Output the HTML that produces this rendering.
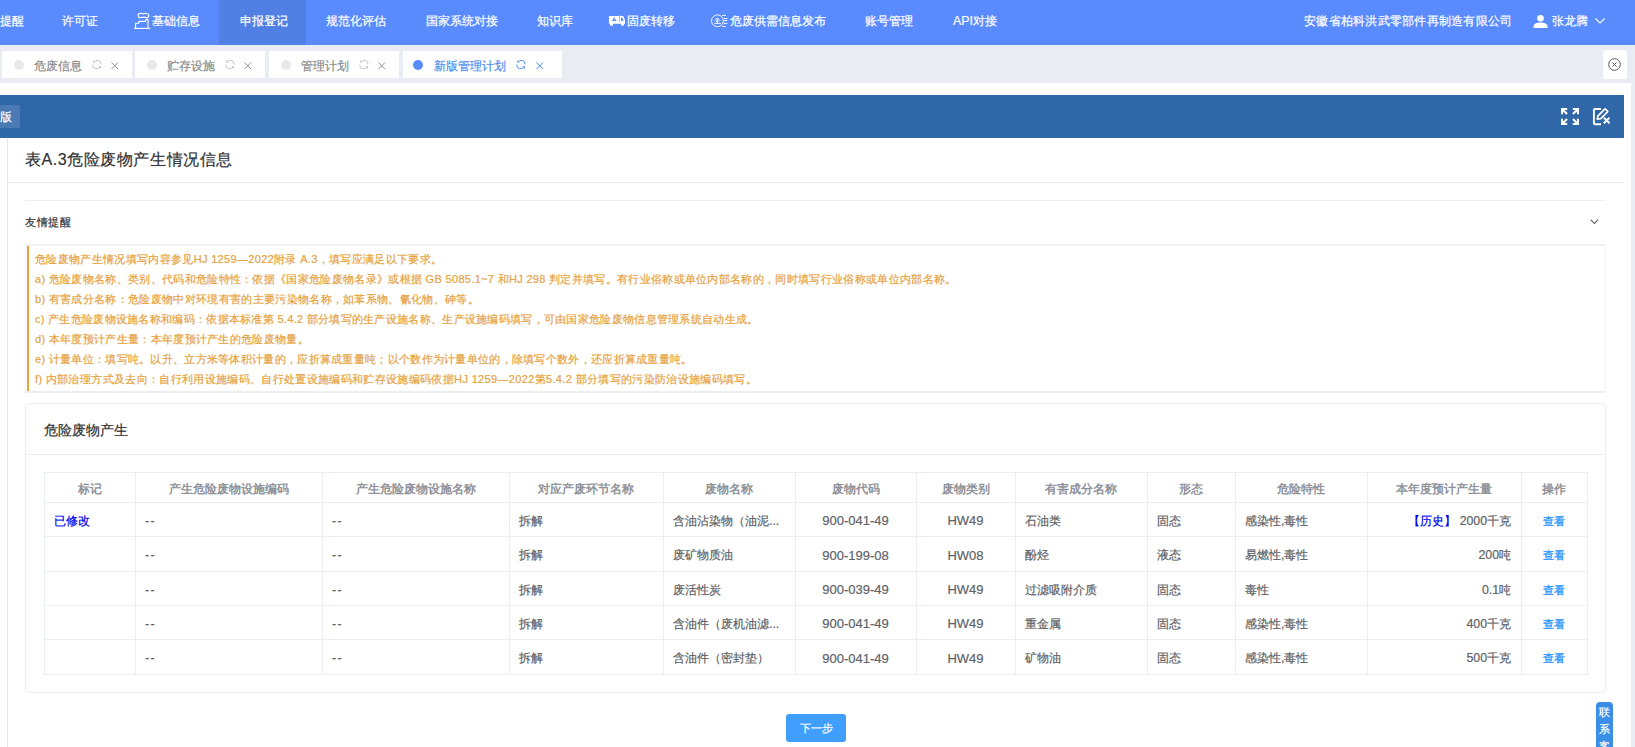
<!DOCTYPE html>
<html><head><meta charset="utf-8">
<style>
*{box-sizing:border-box;margin:0;padding:0}
html,body{width:1635px;height:747px;overflow:hidden;background:#fff;font-family:"Liberation Sans",sans-serif;}
body *{-webkit-text-stroke-width:0.2px}
.abs{position:absolute;white-space:nowrap}
#nav{position:absolute;left:0;top:0;width:1635px;height:45px;background:#598bff;color:#fff;font-size:12.3px}
#nav .it{position:absolute;top:0;height:43px;line-height:43px}
#nav .act{position:absolute;left:219px;top:0;width:87px;height:45px;background:#5080e3}
#tabbar{position:absolute;left:0;top:45px;width:1635px;height:38px;background:#e9ecf3}
.tab{position:absolute;top:6px;height:27px;background:#fff;font-size:12px;color:#8c8c8c}
.tab .dot{position:absolute;top:9px;width:10px;height:10px;border-radius:50%;background:#e8e8e8}
.tab .tx{position:absolute;top:1.5px;line-height:27px}
.tab svg{position:absolute}
#content{position:absolute;left:0;top:83px;width:1631px;height:664px;background:#fff}
#strip{position:absolute;left:1631px;top:83px;width:4px;height:664px;background:#e9ecf3}
#tbar{position:absolute;left:0;top:95px;width:1624px;height:43px;background:#2f67a8}
table{border-collapse:collapse;table-layout:fixed}

#tbl .hl{position:absolute;left:44px;width:1544px;background:#ebeef5}
#tbl .vl{position:absolute;top:472px;width:1px;height:202px;background:#ebeef5}
#tbl .th{position:absolute;top:473.5px;height:30px;line-height:30px;text-align:center;font-weight:bold;color:#909399;font-size:12px;white-space:nowrap}
#tbl .td{position:absolute;font-size:12.3px;color:#606266;white-space:nowrap;overflow:hidden;padding-top:1.5px}
#tbl .num{font-size:13px}
#tbl .td.l{padding-left:10px}
#tbl .td.c{text-align:center}
#tbl .td.r{text-align:right;padding-right:10px}
#tbl .mod{color:#0000ee}
#tbl .hist{color:#0000ee}
#tbl .view{color:#409eff;font-size:10.5px;font-weight:bold;-webkit-text-stroke-width:0}
#tbl .th{-webkit-text-stroke-width:0}
#tbl .dash{letter-spacing:1.5px}
</style></head><body>
<div id="nav">
  <div class="act"></div>
  <div class="it" style="left:0px">提醒</div>
  <div class="it" style="left:62px">许可证</div>
  <svg class="abs" style="left:130px;top:8px" width="25" height="25" viewBox="0 0 25 25" fill="none" stroke="#fff" stroke-width="1.1" stroke-linejoin="round"><path d="M4 20.4H20.3"/><path d="M5.6 20.4V15.3H8.9V13.4H15.7V12.3Q15.7 11.4 16.85 11.4Q18 11.4 18 12.3V20.4"/><path d="M9.8 9.6Q8.1 9.6 8.1 7.6Q8.1 5.3 10.3 5.4Q11.7 5.1 13 5.9Q14.6 5.1 16.3 5.5Q18.9 5.9 18.9 7.8Q18.9 9.7 16.9 9.6Q15 9.4 13.9 9.1Q12.3 9.7 9.8 9.6Z"/></svg>
  <div class="it" style="left:152px">基础信息</div>
  <div class="it" style="left:240px">申报登记</div>
  <div class="it" style="left:326px">规范化评估</div>
  <div class="it" style="left:426px">国家系统对接</div>
  <div class="it" style="left:537px">知识库</div>
  <svg class="abs" style="left:603px;top:8px" width="28" height="25" viewBox="0 0 28 25"><path fill="#fff" fill-rule="evenodd" d="M6.4 7.9H16.4V14H6.4Q5.9 14 5.9 13.5V8.4Q5.9 7.9 6.4 7.9Z M11.3 9L8.9 12.9H13.7Z"/><path fill="#fff" d="M11.1 10.2h.4v2.4h-.4z"/><path fill="#fff" fill-rule="evenodd" d="M16.9 7V14H16.4V14H5.9V15.7H22V12.2L20.6 8.6Q20.3 8 19.6 8H17.4V7Z M18 9.7H19.6L20.4 13H18Z"/><rect x="7" y="15" width="3" height="2.7" rx="1" fill="#fff"/><rect x="18" y="15" width="3" height="2.7" rx="1" fill="#fff"/></svg>
  <div class="it" style="left:627px">固废转移</div>
  <svg class="abs" style="left:707px;top:8px" width="25" height="25" viewBox="0 0 25 25" fill="none" stroke="#fff" stroke-width="0.9"><circle cx="10.4" cy="12.8" r="5.9"/><path d="M7.6 12.6L10.4 10.1 13.3 12.6M10.4 10.4V15M8.8 13.2H12M7.3 15.4H13.8"/><path d="M15 7.4H18.9M16.7 10.5H20.4M16.7 12.5H20.4M16.7 15.4H20.4M15 18.4H18.9"/></svg>
  <div class="it" style="left:730px">危废供需信息发布</div>
  <div class="it" style="left:865px">账号管理</div>
  <div class="it" style="left:953px">API对接</div>
  <div class="it" style="left:1304px;letter-spacing:0.25px">安徽省柏科洪武零部件再制造有限公司</div>
  <svg class="abs" style="left:1533px;top:15px" width="15" height="13" viewBox="0 0 15 13"><circle cx="7.5" cy="3.3" r="3.3" fill="#fff"/><path d="M0.5 13v-1.5C.5 9 3.5 7.5 7.5 7.5S14.5 9 14.5 11.5V13z" fill="#fff"/></svg>
  <div class="it" style="left:1552px">张龙腾</div>
  <svg class="abs" style="left:1595px;top:18px" width="10" height="6" viewBox="0 0 10 6" fill="none" stroke="#fff" stroke-width="1.1"><path d="M.5.5L5 5 9.5.5"/></svg>
</div>

<div id="tabbar">
  <div class="tab" style="left:2px;width:130px"><div class="dot" style="left:12px"></div><div class="tx" style="left:32px">危废信息</div>
    <svg style="left:90px;top:9px" width="10" height="10" viewBox="0 0 10 10" fill="none" stroke="#c0c0c0" stroke-width="1"><path d="M2.6 1.5Q3.4 .5 5 .5H6.4Q8.9 .5 9.1 4.4"/><path d="M.7 4.6Q.8 8.6 3.6 8.6H5.2Q6.4 8.6 7.4 7.6"/><path d="M1.2 0V2.6H3.8z M8.9 8.9V6.3H6.3z" fill="#c0c0c0" stroke="none"/></svg>
    <svg style="left:109px;top:11px" width="8" height="8" viewBox="0 0 8 8" stroke="#909090" stroke-width="1"><path d="M.5 .5L7 7M7 .5L.5 7"/></svg></div>
  <div class="tab" style="left:135px;width:130px"><div class="dot" style="left:12px"></div><div class="tx" style="left:32px">贮存设施</div>
    <svg style="left:90px;top:9px" width="10" height="10" viewBox="0 0 10 10" fill="none" stroke="#c0c0c0" stroke-width="1"><path d="M2.6 1.5Q3.4 .5 5 .5H6.4Q8.9 .5 9.1 4.4"/><path d="M.7 4.6Q.8 8.6 3.6 8.6H5.2Q6.4 8.6 7.4 7.6"/><path d="M1.2 0V2.6H3.8z M8.9 8.9V6.3H6.3z" fill="#c0c0c0" stroke="none"/></svg>
    <svg style="left:109px;top:11px" width="8" height="8" viewBox="0 0 8 8" stroke="#909090" stroke-width="1"><path d="M.5 .5L7 7M7 .5L.5 7"/></svg></div>
  <div class="tab" style="left:269px;width:130px"><div class="dot" style="left:12px"></div><div class="tx" style="left:32px">管理计划</div>
    <svg style="left:90px;top:9px" width="10" height="10" viewBox="0 0 10 10" fill="none" stroke="#c0c0c0" stroke-width="1"><path d="M2.6 1.5Q3.4 .5 5 .5H6.4Q8.9 .5 9.1 4.4"/><path d="M.7 4.6Q.8 8.6 3.6 8.6H5.2Q6.4 8.6 7.4 7.6"/><path d="M1.2 0V2.6H3.8z M8.9 8.9V6.3H6.3z" fill="#c0c0c0" stroke="none"/></svg>
    <svg style="left:109px;top:11px" width="8" height="8" viewBox="0 0 8 8" stroke="#909090" stroke-width="1"><path d="M.5 .5L7 7M7 .5L.5 7"/></svg></div>
  <div class="tab" style="left:403px;width:159px;color:#4e8ef0"><div class="dot" style="left:10px;background:#598bff"></div><div class="tx" style="left:31px">新版管理计划</div>
    <svg style="left:113px;top:9px" width="10" height="10" viewBox="0 0 10 10" fill="none" stroke="#4e8ef0" stroke-width="1"><path d="M2.6 1.5Q3.4 .5 5 .5H6.4Q8.9 .5 9.1 4.4"/><path d="M.7 4.6Q.8 8.6 3.6 8.6H5.2Q6.4 8.6 7.4 7.6"/><path d="M1.2 0V2.6H3.8z M8.9 8.9V6.3H6.3z" fill="#4e8ef0" stroke="none"/></svg>
    <svg style="left:133px;top:11px" width="8" height="8" viewBox="0 0 8 8" stroke="#4e8ef0" stroke-width="1"><path d="M.5 .5L7 7M7 .5L.5 7"/></svg></div>
  <div class="tab" style="left:1603px;width:24px;top:5px;height:29px;border-radius:2px">
    <svg style="left:5px;top:8px" width="13" height="13" viewBox="0 0 13 13" fill="none" stroke="#555" stroke-width="1"><circle cx="6.5" cy="6.5" r="5.8"/><path d="M4.5 4.5l4 4M8.5 4.5l-4 4"/></svg></div>
</div>

<div id="content"></div>
<div id="strip"></div>
<div id="card">
  <div class="abs" style="left:7px;top:138px;width:1px;height:609px;background:#e4e7ed"></div>
  <div class="abs" style="left:7px;top:182px;width:1617px;height:1px;background:#ebeef5"></div>
  <div class="abs" id="title" style="left:25px;top:148px;font-size:16px;letter-spacing:0.55px;line-height:24px;color:#303133">表A.3危险废物产生情况信息</div>
  <div class="abs" style="left:25px;top:200px;width:1581px;height:1px;background:#ebeef5"></div>
  <div class="abs" id="remind" style="left:25px;top:212px;font-size:11px;letter-spacing:0.6px;line-height:20px;color:#303133">友情提醒</div>
  <svg class="abs" style="left:1590px;top:219px" width="9" height="6" viewBox="0 0 9 6" fill="none" stroke="#606266" stroke-width="1.1"><path d="M.6 .6L4.4 4.4 8.2 .6"/></svg>
  <div class="abs" id="notice" style="left:25px;top:244px;width:1581px;height:149px;border:1px solid #f2f2f2;border-top:2px solid #f0f0f0;border-bottom:2px solid #eeeeee;background:#fff">
    <div class="abs" style="left:1px;top:0;width:2px;height:145px;background:#e6a23c"></div>
    <div class="abs" id="ntext" style="left:9px;top:3px;font-size:11px;line-height:20px;color:#e6a23c">
<div style="letter-spacing:0.333px">危险废物产生情况填写内容参见HJ 1259—2022附录 A.3，填写应满足以下要求。</div>
<div style="letter-spacing:0.317px">a) 危险废物名称、类别、代码和危险特性：依据《国家危险废物名录》或根据 GB 5085.1~7 和HJ 298 判定并填写。有行业俗称或单位内部名称的，同时填写行业俗称或单位内部名称。</div>
<div style="letter-spacing:0.322px">b) 有害成分名称：危险废物中对环境有害的主要污染物名称，如苯系物、氰化物、砷等。</div>
<div style="letter-spacing:0.296px">c) 产生危险废物设施名称和编码：依据本标准第 5.4.2 部分填写的生产设施名称、生产设施编码填写，可由国家危险废物信息管理系统自动生成。</div>
<div style="letter-spacing:0.312px">d) 本年度预计产生量：本年度预计产生的危险废物量。</div>
<div style="letter-spacing:0.297px">e) 计量单位：填写吨。以升、立方米等体积计量的，应折算成重量吨；以个数作为计量单位的，除填写个数外，还应折算成重量吨。</div>
<div style="letter-spacing:0.342px">f) 内部治理方式及去向：自行利用设施编码、自行处置设施编码和贮存设施编码依据HJ 1259—2022第5.4.2 部分填写的污染防治设施编码填写。</div>
</div>
  </div>
  <div class="abs" id="tcard" style="left:25px;top:403px;width:1581px;height:290px;border:1px solid #ebeef5;border-radius:4px;background:#fff">
    <div class="abs" style="left:18px;top:14px;font-size:14px;line-height:24px;color:#303133">危险废物产生</div>
    <div class="abs" style="left:0;top:50px;width:1579px;height:1px;background:#ebeef5"></div>
  </div>
  <div class="abs" style="left:786px;top:714px;width:60px;height:28px;border-radius:3px;background:#409eff;color:#fff;font-size:10.5px;line-height:28px;text-align:center">下一步</div>
  <div class="abs" style="left:1596px;top:702px;width:17px;height:60px;border-radius:4px 4px 0 0;background:#3a8ee6;color:#fff;font-size:10.5px;line-height:16.8px;text-align:center;white-space:normal;padding-top:2px;width:17px;word-break:break-all">联系客</div>
</div>

<div id="tbar">
  <div class="abs" style="left:0;top:10px;width:20px;height:23px;background:rgba(255,255,255,.13);border-radius:0 2px 2px 0;color:#fff;font-size:11.5px;line-height:22px;overflow:hidden"><span style="position:absolute;right:8px;top:1px">新版</span></div>
  <svg class="abs" style="left:1556px;top:8px" width="60" height="27" viewBox="0 0 60 27" fill="#fff"><path id="fa" d="M5 5H11.2V7.1H8.6L11.8 10.3L10.3 11.8L7.1 8.6V11.2H5Z"/><use href="#fa" transform="translate(28 0) scale(-1 1)"/><use href="#fa" transform="translate(0 27) scale(1 -1)"/><use href="#fa" transform="translate(28 27) scale(-1 -1)"/>
<path fill="none" stroke="#fff" stroke-width="1.9" d="M45 6H39.2Q37.9 6 37.9 7.3V19.9Q37.9 21.2 39.2 21.2H45"/>
<path fill="none" stroke="#fff" stroke-width="1.7" stroke-linejoin="round" d="M41.2 16.2L42 12.8L48.7 6.1Q49.1 5.7 49.5 6.1L51.5 8.1Q51.9 8.5 51.5 8.9L44.8 15.6Z"/>
<path fill="none" stroke="#fff" stroke-width="2" d="M47.8 14.6L53.5 20.3M53.5 14.6L47.8 20.3"/></svg>
</div>
<div id="tbl">
<div class="hl" style="top:472px;height:1px"></div>
<div class="hl" style="top:502px;height:1px"></div>
<div class="hl" style="top:536px;height:1px"></div>
<div class="hl" style="top:571px;height:1px"></div>
<div class="hl" style="top:605px;height:1px"></div>
<div class="hl" style="top:639px;height:1px"></div>
<div class="hl" style="top:674px;height:1px"></div>
<div class="vl" style="left:44px"></div>
<div class="vl" style="left:135px"></div>
<div class="vl" style="left:322px"></div>
<div class="vl" style="left:509px"></div>
<div class="vl" style="left:663px"></div>
<div class="vl" style="left:795px"></div>
<div class="vl" style="left:916px"></div>
<div class="vl" style="left:1015px"></div>
<div class="vl" style="left:1147px"></div>
<div class="vl" style="left:1235px"></div>
<div class="vl" style="left:1367px"></div>
<div class="vl" style="left:1521px"></div>
<div class="vl" style="left:1587px"></div>
<div class="th" style="left:44px;width:91px">标记</div>
<div class="th" style="left:135px;width:187px">产生危险废物设施编码</div>
<div class="th" style="left:322px;width:187px">产生危险废物设施名称</div>
<div class="th" style="left:509px;width:154px">对应产废环节名称</div>
<div class="th" style="left:663px;width:132px">废物名称</div>
<div class="th" style="left:795px;width:121px">废物代码</div>
<div class="th" style="left:916px;width:99px">废物类别</div>
<div class="th" style="left:1015px;width:132px">有害成分名称</div>
<div class="th" style="left:1147px;width:88px">形态</div>
<div class="th" style="left:1235px;width:132px">危险特性</div>
<div class="th" style="left:1367px;width:154px">本年度预计产生量</div>
<div class="th" style="left:1521px;width:66px">操作</div>
<div class="td mod l" style="left:44px;width:91px;top:502px;height:34px;line-height:34px">已修改</div>
<div class="td l" style="left:135px;width:187px;top:502px;height:34px;line-height:34px"><span class="dash">--</span></div>
<div class="td l" style="left:322px;width:187px;top:502px;height:34px;line-height:34px"><span class="dash">--</span></div>
<div class="td l" style="left:509px;width:154px;top:502px;height:34px;line-height:34px">拆解</div>
<div class="td l" style="left:663px;width:132px;top:502px;height:34px;line-height:34px">含油沾染物（油泥...</div>
<div class="td num c" style="left:795px;width:121px;top:502px;height:34px;line-height:34px">900-041-49</div>
<div class="td num c" style="left:916px;width:99px;top:502px;height:34px;line-height:34px">HW49</div>
<div class="td l" style="left:1015px;width:132px;top:502px;height:34px;line-height:34px">石油类</div>
<div class="td l" style="left:1147px;width:88px;top:502px;height:34px;line-height:34px">固态</div>
<div class="td l" style="left:1235px;width:132px;top:502px;height:34px;line-height:34px">感染性,毒性</div>
<div class="td r" style="left:1367px;width:154px;top:502px;height:34px;line-height:34px"><span class="hist">【历史】</span> 2000千克</div>
<div class="td view c" style="left:1521px;width:66px;top:502px;height:34px;line-height:34px">查看</div>
<div class="td l" style="left:135px;width:187px;top:536px;height:35px;line-height:35px"><span class="dash">--</span></div>
<div class="td l" style="left:322px;width:187px;top:536px;height:35px;line-height:35px"><span class="dash">--</span></div>
<div class="td l" style="left:509px;width:154px;top:536px;height:35px;line-height:35px">拆解</div>
<div class="td l" style="left:663px;width:132px;top:536px;height:35px;line-height:35px">废矿物质油</div>
<div class="td num c" style="left:795px;width:121px;top:536px;height:35px;line-height:35px">900-199-08</div>
<div class="td num c" style="left:916px;width:99px;top:536px;height:35px;line-height:35px">HW08</div>
<div class="td l" style="left:1015px;width:132px;top:536px;height:35px;line-height:35px">酚烃</div>
<div class="td l" style="left:1147px;width:88px;top:536px;height:35px;line-height:35px">液态</div>
<div class="td l" style="left:1235px;width:132px;top:536px;height:35px;line-height:35px">易燃性,毒性</div>
<div class="td r" style="left:1367px;width:154px;top:536px;height:35px;line-height:35px">200吨</div>
<div class="td view c" style="left:1521px;width:66px;top:536px;height:35px;line-height:35px">查看</div>
<div class="td l" style="left:135px;width:187px;top:571px;height:34px;line-height:34px"><span class="dash">--</span></div>
<div class="td l" style="left:322px;width:187px;top:571px;height:34px;line-height:34px"><span class="dash">--</span></div>
<div class="td l" style="left:509px;width:154px;top:571px;height:34px;line-height:34px">拆解</div>
<div class="td l" style="left:663px;width:132px;top:571px;height:34px;line-height:34px">废活性炭</div>
<div class="td num c" style="left:795px;width:121px;top:571px;height:34px;line-height:34px">900-039-49</div>
<div class="td num c" style="left:916px;width:99px;top:571px;height:34px;line-height:34px">HW49</div>
<div class="td l" style="left:1015px;width:132px;top:571px;height:34px;line-height:34px">过滤吸附介质</div>
<div class="td l" style="left:1147px;width:88px;top:571px;height:34px;line-height:34px">固态</div>
<div class="td l" style="left:1235px;width:132px;top:571px;height:34px;line-height:34px">毒性</div>
<div class="td r" style="left:1367px;width:154px;top:571px;height:34px;line-height:34px">0.1吨</div>
<div class="td view c" style="left:1521px;width:66px;top:571px;height:34px;line-height:34px">查看</div>
<div class="td l" style="left:135px;width:187px;top:605px;height:34px;line-height:34px"><span class="dash">--</span></div>
<div class="td l" style="left:322px;width:187px;top:605px;height:34px;line-height:34px"><span class="dash">--</span></div>
<div class="td l" style="left:509px;width:154px;top:605px;height:34px;line-height:34px">拆解</div>
<div class="td l" style="left:663px;width:132px;top:605px;height:34px;line-height:34px">含油件（废机油滤...</div>
<div class="td num c" style="left:795px;width:121px;top:605px;height:34px;line-height:34px">900-041-49</div>
<div class="td num c" style="left:916px;width:99px;top:605px;height:34px;line-height:34px">HW49</div>
<div class="td l" style="left:1015px;width:132px;top:605px;height:34px;line-height:34px">重金属</div>
<div class="td l" style="left:1147px;width:88px;top:605px;height:34px;line-height:34px">固态</div>
<div class="td l" style="left:1235px;width:132px;top:605px;height:34px;line-height:34px">感染性,毒性</div>
<div class="td r" style="left:1367px;width:154px;top:605px;height:34px;line-height:34px">400千克</div>
<div class="td view c" style="left:1521px;width:66px;top:605px;height:34px;line-height:34px">查看</div>
<div class="td l" style="left:135px;width:187px;top:639px;height:35px;line-height:35px"><span class="dash">--</span></div>
<div class="td l" style="left:322px;width:187px;top:639px;height:35px;line-height:35px"><span class="dash">--</span></div>
<div class="td l" style="left:509px;width:154px;top:639px;height:35px;line-height:35px">拆解</div>
<div class="td l" style="left:663px;width:132px;top:639px;height:35px;line-height:35px">含油件（密封垫）</div>
<div class="td num c" style="left:795px;width:121px;top:639px;height:35px;line-height:35px">900-041-49</div>
<div class="td num c" style="left:916px;width:99px;top:639px;height:35px;line-height:35px">HW49</div>
<div class="td l" style="left:1015px;width:132px;top:639px;height:35px;line-height:35px">矿物油</div>
<div class="td l" style="left:1147px;width:88px;top:639px;height:35px;line-height:35px">固态</div>
<div class="td l" style="left:1235px;width:132px;top:639px;height:35px;line-height:35px">感染性,毒性</div>
<div class="td r" style="left:1367px;width:154px;top:639px;height:35px;line-height:35px">500千克</div>
<div class="td view c" style="left:1521px;width:66px;top:639px;height:35px;line-height:35px">查看</div>
</div>
</body></html>
